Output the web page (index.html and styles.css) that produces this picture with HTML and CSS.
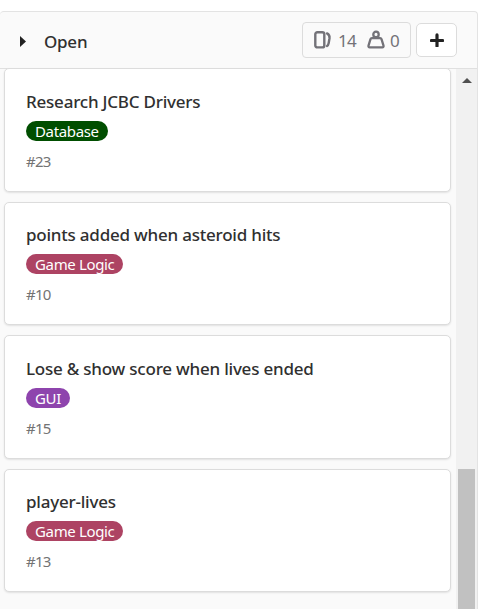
FILE: index.html
```html
<!DOCTYPE html>
<html lang="en">
<head>
<meta charset="utf-8">
<title>Open issues</title>
<link rel="stylesheet" href="styles.css">
</head>
<body>
<main class="board">
  <header class="header">
    <svg class="caret" width="6" height="11" viewBox="0 0 6 11"><path d="M0 0 6 5.5 0 11Z" fill="#222"/></svg>
    <h1 class="heading">Open</h1>
    <div class="counts">
      <svg class="issues" width="18" height="20" viewBox="0 0 18 20" fill="none" stroke="#737278" stroke-width="2.4" stroke-linecap="round" stroke-linejoin="round"><rect x="1.3" y="2.2" width="9" height="15.2" rx="2"/><path d="M13 3.4Q15.9 5 15.5 8.2L14.7 13Q14.3 15.3 13 16"/></svg>
      <span class="num total">14</span>
      <svg class="weight" width="18" height="20" viewBox="0 0 18 20" fill="none" stroke="#737278" stroke-width="2.3" stroke-linejoin="round"><circle cx="9" cy="4.4" r="2.7"/><path d="M4.9 8.1H13.1Q14.2 8.1 14.5 9.2L16.5 15.7Q16.8 17.3 15.3 17.3H2.7Q1.2 17.3 1.5 15.7L3.5 9.2Q3.8 8.1 4.9 8.1Z"/></svg>
      <span class="num">0</span>
    </div>
    <button class="add" aria-label="Add issue"><svg width="14" height="14" viewBox="0 0 14 14"><path d="M7 1.9V13.1M1.4 7.5H12.6" stroke="#222" stroke-width="3.2" stroke-linecap="round"/></svg></button>
  </header>
  <div class="body">
    <div class="cards">
      <article class="card"><h2 class="title">Research JCBC Drivers</h2><span class="label database">Database</span><span class="id">#23</span></article>
      <article class="card"><h2 class="title">points added when asteroid hits</h2><span class="label logic">Game Logic</span><span class="id">#10</span></article>
      <article class="card"><h2 class="title">Lose &amp; show score when lives ended</h2><span class="label gui">GUI</span><span class="id">#15</span></article>
      <article class="card"><h2 class="title">player-lives</h2><span class="label logic">Game Logic</span><span class="id">#13</span></article>
    </div>
    <div class="track">
      <svg class="arrow" width="10" height="5" viewBox="0 0 10 5"><path d="M0 5 5 0 10 5Z" fill="#505050"/></svg>
      <div class="thumb"></div>
    </div>
  </div>
</main>
</body>
</html>
```
FILE: styles.css
```css
* { box-sizing: border-box; }
body {
  margin: 0;
  height: 609px;
  padding-top: 11px;
  overflow: hidden;
  background: #fff;
  font-family: "Noto Sans", "Open Sans", sans-serif;
  color: #303030;
}
.board {
  width: 478px;
  height: 598px;
  background: #fafafa;
  border: 1px solid #e3e3e3;
  border-left: 0;
  border-bottom: 0;
  border-radius: 4px 4px 0 0;
  overflow: hidden;
}
.header {
  display: flex;
  align-items: center;
  height: 57px;
  padding: 0 20px;
  border-bottom: 1px solid #e0e0e0;
}
.caret { margin: 3px 18px 0 0; }
.heading {
  margin: 3px auto 0 0;
  font-size: 17px;
  line-height: 24px;
  font-weight: 500;
  letter-spacing: -.25px;
}
.counts {
  display: flex;
  align-items: center;
  width: 109px;
  height: 36px;
  padding-left: 11px;
  border: 1px solid #dcdcdc;
  border-radius: 4px;
  margin-right: 5px;
}
.issues { margin: -1px 6px 0 0; }
.weight { margin: -1px 5px 0 -1px; }
.num {
  margin-top: 2px;
  font-size: 17px;
  line-height: 24px;
  color: #737278;
}
.total { width: 30px; letter-spacing: -.6px; }
.add {
  display: flex;
  align-items: center;
  justify-content: center;
  width: 41px;
  height: 34px;
  padding: 0;
  background: #fff;
  border: 1px solid #dcdcdc;
  border-radius: 5px;
}
.body {
  display: flex;
  justify-content: space-between;
  height: 540px;
}
.cards {
  display: flex;
  flex-direction: column;
  gap: 10px;
  width: 451px;
  padding-left: 4px;
  margin-top: -.6px;
}
.card {
  display: flex;
  flex-direction: column;
  align-items: flex-start;
  flex: none;
  height: 123.4px;
  padding: 20.65px 21px 0;
  background: #fff;
  border: 1px solid #dcdcdc;
  border-radius: 5px;
  box-shadow: 0 1px 2px rgba(0, 0, 0, .1);
}
.title {
  margin: 0 0 7px;
  font-size: 17px;
  line-height: 24px;
  font-weight: 500;
  letter-spacing: -.22px;
  white-space: nowrap;
}
.label {
  height: 20px;
  padding: 0 9px;
  border-radius: 10px;
  color: #fff;
  font-size: 15px;
  line-height: 21px;
  letter-spacing: -.35px;
  white-space: nowrap;
}
.database { background: #004e00; }
.logic { background: #ad4363; }
.gui { background: #8e44ad; }
.id {
  margin-top: 10px;
  font-size: 15px;
  line-height: 21px;
  letter-spacing: -.8px;
  color: #737373;
}
.track {
  display: flex;
  flex-direction: column;
  align-items: center;
  width: 21px;
  background: #f1f1f1;
}
.arrow { margin: 9px 0 386px; flex: none; }
.thumb {
  width: 17px;
  flex: 1;
  background: #c1c1c1;
}
```
